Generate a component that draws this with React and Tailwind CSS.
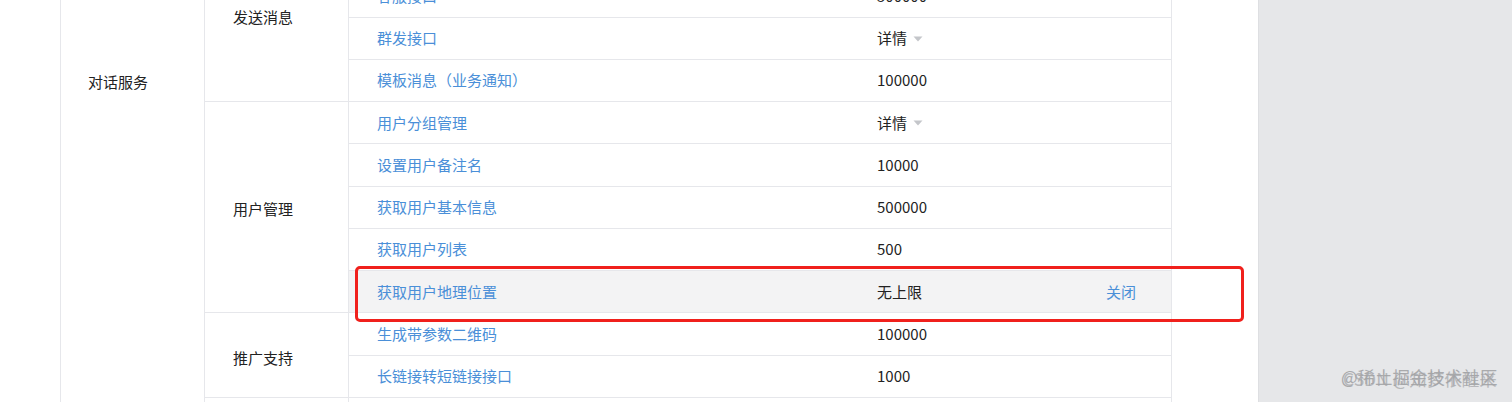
import React from "react";

const FONT = { fontFamily: '"Noto Sans CJK SC", "Noto Sans", sans-serif' };

function Caret() {
  return (
    <svg width="10" height="6" viewBox="0 0 10 6" className="ml-[6px] mt-[1px]">
      <path d="M0.5 0.5 L9.5 0.5 L5 5.5 Z" fill="#c4c6ca" />
    </svg>
  );
}

function Row({ name, value, detail, action, highlight }) {
  return (
    <div
      className={
        "flex h-[42.25px] items-center border-b border-[#e6e7eb] " +
        (highlight ? "bg-[#f3f3f4]" : "bg-white")
      }
    >
      <div className="w-[500px] pl-[28px] text-[#4a8fd8]">{name}</div>
      <div className="w-[229px] pl-[28px] flex items-center text-[#222]">
        {value}
        {detail && <Caret />}
      </div>
      <div className="flex-1 pl-[28px] text-[#4a8fd8]">{action}</div>
    </div>
  );
}

function Group({ label, rows, labelPad }) {
  return (
    <div className="flex">
      <div
        className={
          "w-[144px] shrink-0 border-r border-b border-[#e6e7eb] flex items-center pl-[28px] text-[#222] " +
          (labelPad || "")
        }
      >
        {label}
      </div>
      <div className="flex-1">
        {rows.map((r, i) => (
          <Row key={i} {...r} />
        ))}
      </div>
    </div>
  );
}

export default function App() {
  const groups = [
    {
      label: "发送消息",
      rows: [
        { name: "客服消息", value: "500000" },
        { name: "客服接口", value: "500000" },
        { name: "群发接口", value: "详情", detail: true },
        { name: "模板消息（业务通知）", value: "100000" },
      ],
    },
    {
      label: "用户管理",
      labelPad: "pt-[4px]",
      rows: [
        { name: "用户分组管理", value: "详情", detail: true },
        { name: "设置用户备注名", value: "10000" },
        { name: "获取用户基本信息", value: "500000" },
        { name: "获取用户列表", value: "500" },
        { name: "获取用户地理位置", value: "无上限", action: "关闭", highlight: true },
      ],
    },
    {
      label: "推广支持",
      labelPad: "pt-[5px]",
      rows: [
        { name: "生成带参数二维码", value: "100000" },
        { name: "长链接转短链接接口", value: "1000" },
      ],
    },
  ];

  return (
    <div
      className="relative flex h-[402px] w-[1512px] overflow-hidden bg-[#e6e7e9] text-[15px] leading-[20px]"
      style={FONT}
    >
      <div className="w-[1259px] shrink-0 bg-white pl-[60px] border-r border-[#dedfe2]">
        <div className="-mt-[67px] flex w-[1112px] border-l border-r border-[#e6e7eb]">
          <div className="w-[144px] shrink-0 border-r border-[#e6e7eb] pl-[27px] pt-[139px] text-[#222]">
            对话服务
          </div>
          <div className="flex-1">
            {groups.map((g, i) => (
              <Group key={i} {...g} />
            ))}
            <div className="flex h-[40px]">
              <div className="w-[144px] border-r border-[#e6e7eb]" />
              <div className="flex-1" />
            </div>
          </div>
        </div>
      </div>
      <div className="flex-1" />

      <div className="absolute left-[355px] top-[266px] h-[56px] w-[889px] rounded-[5px] border-[3px] border-[#f0201c]" />

      <div className="absolute left-[1341px] top-[366px] text-[17.5px] leading-[22px] text-[#9a9b9e] opacity-80 whitespace-nowrap">
        @稀土掘金技术社区
      </div>
      <div className="absolute left-[1343px] top-[368px] text-[17.5px] leading-[22px] text-[#a3a4a7] opacity-70 whitespace-nowrap">
        CSDN @知梦依醒来
      </div>
    </div>
  );
}
